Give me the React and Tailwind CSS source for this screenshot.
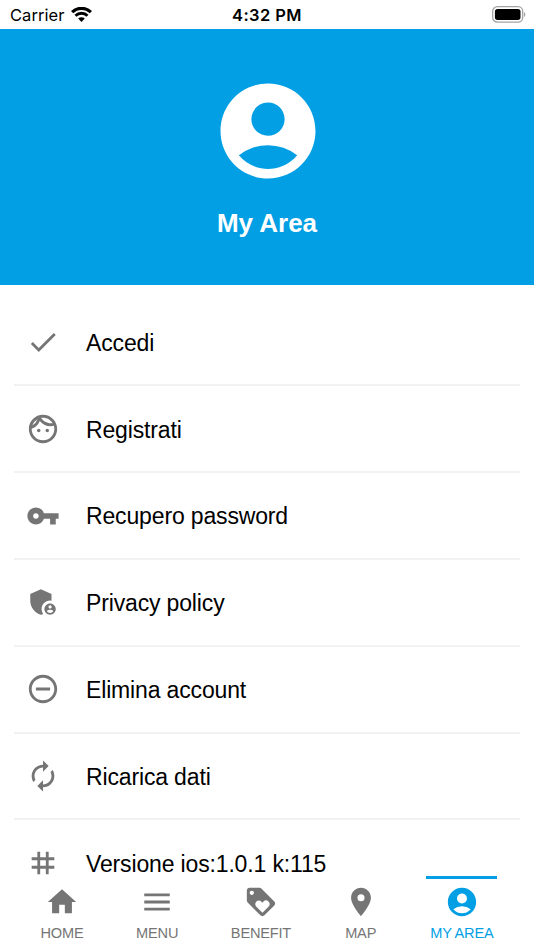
import React, { useState } from "react";
import {
  MdAccountCircle,
  MdCheck,
  MdOutlineFace,
  MdVpnKey,
  MdAdminPanelSettings,
  MdRemoveCircleOutline,
  MdAutorenew,
  MdTag,
  MdHome,
  MdMenu,
  MdLoyalty,
  MdLocationOn,
} from "react-icons/md";

const menuItems = [
  { icon: MdCheck, label: "Accedi" },
  { icon: MdOutlineFace, label: "Registrati" },
  { icon: MdVpnKey, label: "Recupero password" },
  { icon: MdAdminPanelSettings, label: "Privacy policy" },
  { icon: MdRemoveCircleOutline, label: "Elimina account" },
  { icon: MdAutorenew, label: "Ricarica dati" },
  { icon: MdTag, label: "Versione ios:1.0.1 k:115" },
];

const tabs = [
  { icon: MdHome, label: "HOME" },
  { icon: MdMenu, label: "MENU" },
  { icon: MdLoyalty, label: "BENEFIT" },
  { icon: MdLocationOn, label: "MAP" },
  { icon: MdAccountCircle, label: "MY AREA" },
];

function StatusBar() {
  return (
    <div className="h-[29px] shrink-0 grid grid-cols-3 items-center pl-[10px] pr-2 font-['Inter',sans-serif] text-black">
      <div className="flex items-center gap-[7px]">
        <span className="pt-px text-[16.5px] tracking-[0.05px]">Carrier</span>
        <svg className="w-[21px] h-[15px]" viewBox="0 0 21 15" fill="none">
          <path d="M1.1 5.2a13.3 13.3 0 0 1 18.8 0" stroke="black" strokeWidth="3.2" />
          <path d="M4.5 8.8a8.5 8.5 0 0 1 12 0" stroke="black" strokeWidth="3" />
          <path d="M7.2 11.6a4.6 4.6 0 0 1 6.6 0L10.5 15z" fill="black" />
        </svg>
      </div>
      <span className="justify-self-center -ml-0.5 pt-[2px] text-[16.5px] font-semibold tracking-[0.4px]">4:32 PM</span>
      <svg className="justify-self-end w-[34px] h-[17px]" viewBox="0 0 34 17" fill="none">
        <rect x="0.7" y="0.7" width="30" height="15.4" rx="4.6" stroke="#a3a3a3" strokeWidth="1.3" />
        <rect x="2.9" y="2.9" width="25.6" height="11" rx="2.6" fill="black" />
        <path d="M32 6a3 3 0 0 1 0 5z" fill="#a3a3a3" />
      </svg>
    </div>
  );
}

export default function App() {
  const [activeTab, setActiveTab] = useState("MY AREA");

  return (
    <div className="h-[950px] w-[534px] overflow-hidden bg-white flex flex-col font-['Liberation_Sans',sans-serif]">
      <StatusBar />

      {/* Header */}
      <div className="h-64 shrink-0 bg-[#029fe4] flex flex-col items-center pt-[45px] pl-px text-white">
        <MdAccountCircle className="w-[114px] h-[114px]" />
        <h1 className="mt-4 -ml-px text-[26px] font-bold">My Area</h1>
      </div>

      {/* Menu Items */}
      <div className="h-[591px] shrink-0 overflow-hidden px-[14px] pt-[14.6px]">
        {menuItems.map((item) => (
          <button
            key={item.label}
            className="w-full h-[86.8px] flex items-center border-b-2 border-[#f2f2f2] last:border-transparent text-left"
          >
            <item.icon className="w-[34px] h-[34px] ml-3 shrink-0 text-[#757575]" />
            <span className="ml-[26px] pt-[2px] text-[23px] tracking-[-0.15px] text-black">{item.label}</span>
          </button>
        ))}
      </div>

      {/* Tab Bar */}
      <div className="flex-1 flex justify-center gap-[44.6px]">
        {tabs.map((tab) => (
          <button
            key={tab.label}
            onClick={() => setActiveTab(tab.label)}
            className={`flex flex-col items-center px-1 border-t-[3px] pt-[6px] ${
              activeTab === tab.label ? "border-[#029fe4] text-[#029fe4]" : "border-transparent text-[#757575]"
            }`}
          >
            <tab.icon className="w-[34px] h-[34px]" />
            <span className="mt-1 text-[14.6px] leading-5 tracking-[-0.2px] whitespace-nowrap">{tab.label}</span>
          </button>
        ))}
      </div>
    </div>
  );
}
